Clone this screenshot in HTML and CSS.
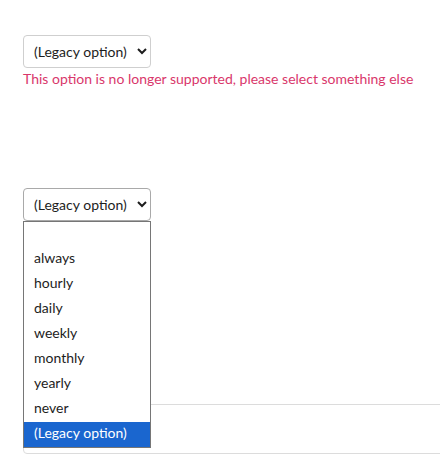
FILE: index.html
```html
<!DOCTYPE html>
<html lang="en">
<head>
<meta charset="utf-8">
<title>Legacy option select</title>
<link rel="stylesheet" href="styles.css">
</head>
<body>
<main class="page">
  <div class="field">
    <select class="select">
      <option></option>
      <option>always</option>
      <option>hourly</option>
      <option>daily</option>
      <option>weekly</option>
      <option>monthly</option>
      <option>yearly</option>
      <option>never</option>
      <option selected>(Legacy option)</option>
    </select>
    <p class="error">This option is no longer supported, please select something else</p>
  </div>

  <div class="field field-open">
    <div class="select-wrap">
      <select class="select">
        <option></option>
        <option>always</option>
        <option>hourly</option>
        <option>daily</option>
        <option>weekly</option>
        <option>monthly</option>
        <option>yearly</option>
        <option>never</option>
        <option selected>(Legacy option)</option>
      </select>
      <ul class="listbox">
        <li class="opt"></li>
        <li class="opt">always</li>
        <li class="opt">hourly</li>
        <li class="opt">daily</li>
        <li class="opt">weekly</li>
        <li class="opt">monthly</li>
        <li class="opt">yearly</li>
        <li class="opt">never</li>
        <li class="opt opt-selected">(Legacy option)</li>
      </ul>
    </div>
  </div>

  <div class="card"></div>
</main>
</body>
</html>
```

FILE: styles.css
```css
html, body {
  margin: 0;
  padding: 0;
  background: #fff;
}

body {
  font-family: Lato, "Open Sans", sans-serif;
  font-size: 14px;
  color: #1d1d1d;
}

.page {
  padding: 35px 0 0 23px;
  display: flex;
  flex-direction: column;
}

.field {
  display: flex;
  flex-direction: column;
  align-items: flex-start;
}

.select {
  font-family: Lato, "Open Sans", sans-serif;
  font-size: 14px;
  color: #1d1d1d;
  width: 128px;
  height: 33px;
  padding: 0 6px;
  border: 1px solid #cfcfcf;
  border-radius: 4px;
  background: #fff;
}

.error {
  margin: 2px 0 0;
  color: #d9376b;
  font-size: 14px;
  line-height: 18px;
}

.field-open {
  margin-top: 100px;
}

.select-wrap {
  position: relative;
}

.field-open .select {
  border-color: #a9a9a9;
}

.listbox {
  position: absolute;
  top: 33px;
  left: 0;
  width: 128px;
  box-sizing: border-box;
  margin: 0;
  padding: 0;
  list-style: none;
  background: #fff;
  border: 1px solid #767676;
  z-index: 2;
}

.opt {
  height: 25px;
  line-height: 21px;
  padding-left: 10px;
  color: #1d1d1d;
}

.opt-selected {
  background: #1a66cf;
  color: #fff;
}

.card {
  margin-top: 183px;
  height: 48px;
  margin-right: -20px;
  border: 1px solid #dcdcdc;
  border-radius: 4px;
}
```
